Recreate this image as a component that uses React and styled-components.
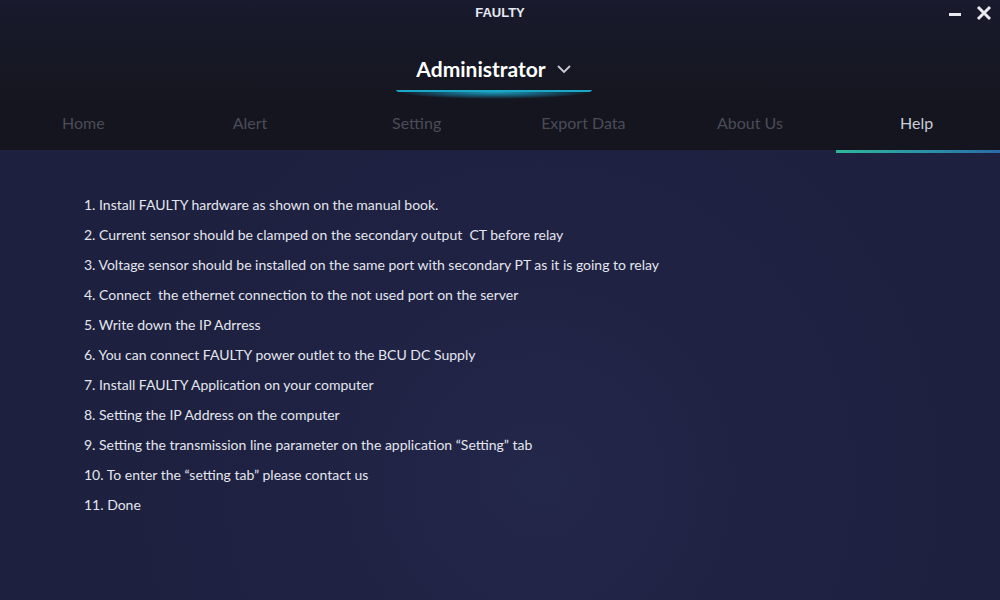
import styled, { createGlobalStyle } from 'styled-components';

const Global = createGlobalStyle`
    html, body {
        margin: 0;
        padding: 0;
        background: #14151f;
    }
    * { box-sizing: border-box; }
`

const Page = styled.div`
    width: 1000px;
    height: 600px;
    display: flex;
    flex-direction: column;
    font-family: 'Lato', 'Open Sans', sans-serif;
    overflow: hidden;
`

const Header = styled.div`
    height: 100px;
    background: linear-gradient(180deg, #181a2d 0%, #15161f 100%);
    display: flex;
    flex-direction: column;
`

const TitleBar = styled.div`
    height: 28px;
    display: grid;
    grid-template-columns: 1fr auto 1fr;
    align-items: center;
    .title {
        color: #e6e9f2;
        font-family: 'Liberation Sans', Arial, sans-serif;
        font-weight: 700;
        font-size: 13px;
        margin-top: -4px;
    }
    .controls {
        justify-self: end;
        display: flex;
        align-items: center;
        gap: 14px;
        padding-right: 8px;
        margin-top: -2px;
    }
`

const UserArea = styled.div`
    flex: 1;
    display: flex;
    flex-direction: column;
    align-items: center;
    padding-top: 28px;
`

const UserName = styled.div`
    display: flex;
    align-items: center;
    gap: 10px;
    color: #ffffff;
    font-size: 21px;
    font-weight: 700;
    padding-right: 12px;
`

const Glow = styled.div`
    margin-top: 9px;
    width: 196px;
    height: 9px;
    margin-left: -12px;
    background: radial-gradient(ellipse 50% 100% at 50% 0%, rgba(26, 166, 196, 0.95) 0%, rgba(26, 150, 190, 0.55) 50%, rgba(20, 21, 31, 0) 100%);
    border-top: 2px solid #1ba7c6;
    border-radius: 50% / 0 0 100% 100%;
`

const TabBar = styled.div`
    height: 50px;
    background: #14151f;
    display: grid;
    grid-template-columns: repeat(6, 1fr);
`

const Tab = styled.div`
    position: relative;
    display: flex;
    justify-content: center;
    align-items: center;
    font-size: 16px;
    color: ${p => p.$active ? '#c9cdd9' : '#4b4c57'};
    padding-bottom: 6px;
    &::after {
        content: '';
        display: ${p => p.$active ? 'block' : 'none'};
        position: absolute;
        left: 3px;
        right: 0;
        bottom: -3px;
        height: 3px;
        background: linear-gradient(90deg, #2fb79a 0%, #2a8ea8 60%, #2a6aa6 100%);
    }
`

const Content = styled.div`
    flex: 1;
    background: radial-gradient(circle at 540px 330px, #23274a 0%, #1f2243 35%, #1d203e 70%);
    padding: 40px 0 0 84px;
`

const List = styled.div`
    display: flex;
    flex-direction: column;
`

const Item = styled.div`
    height: 30px;
    line-height: 30px;
    color: #e4e6ee;
    font-size: 14px;
    white-space: pre;
`

const steps = [
    '1. Install FAULTY hardware as shown on the manual book.',
    '2. Current sensor should be clamped on the secondary output  CT before relay',
    '3. Voltage sensor should be installed on the same port with secondary PT as it is going to relay',
    '4. Connect  the ethernet connection to the not used port on the server',
    '5. Write down the IP Adrress',
    '6. You can connect FAULTY power outlet to the BCU DC Supply',
    '7. Install FAULTY Application on your computer',
    '8. Setting the IP Address on the computer',
    '9. Setting the transmission line parameter on the application \u201cSetting\u201d tab',
    '10. To enter the \u201csetting tab\u201d please contact us',
    '11. Done',
]

const tabs = ['Home', 'Alert', 'Setting', 'Export Data', 'About Us', 'Help']

const App = () => {
    return (
        <Page>
            <Global />
            <Header>
                <TitleBar>
                    <div />
                    <div className="title">FAULTY</div>
                    <div className="controls">
                        <svg width="14" height="14" viewBox="0 0 14 14">
                            <rect x="1" y="7" width="12" height="3" fill="#e8eaf0" />
                        </svg>
                        <svg width="16" height="16" viewBox="0 0 16 16">
                            <path d="M2 2 L14 14 M14 2 L2 14" stroke="#e8eaf0" strokeWidth="3" />
                        </svg>
                    </div>
                </TitleBar>
                <UserArea>
                    <UserName>
                        Administrator
                        <svg width="16" height="10" viewBox="0 0 16 10">
                            <path d="M2 2 L8 8 L14 2" stroke="#c9ccd6" strokeWidth="1.8" fill="none" />
                        </svg>
                    </UserName>
                    <Glow />
                </UserArea>
            </Header>
            <TabBar>
                {tabs.map(t => (
                    <Tab key={t} $active={t === 'Help'}>{t}</Tab>
                ))}
            </TabBar>
            <Content>
                <List>
                    {steps.map(s => <Item key={s}>{s}</Item>)}
                </List>
            </Content>
        </Page>
    )
}

export default App;
